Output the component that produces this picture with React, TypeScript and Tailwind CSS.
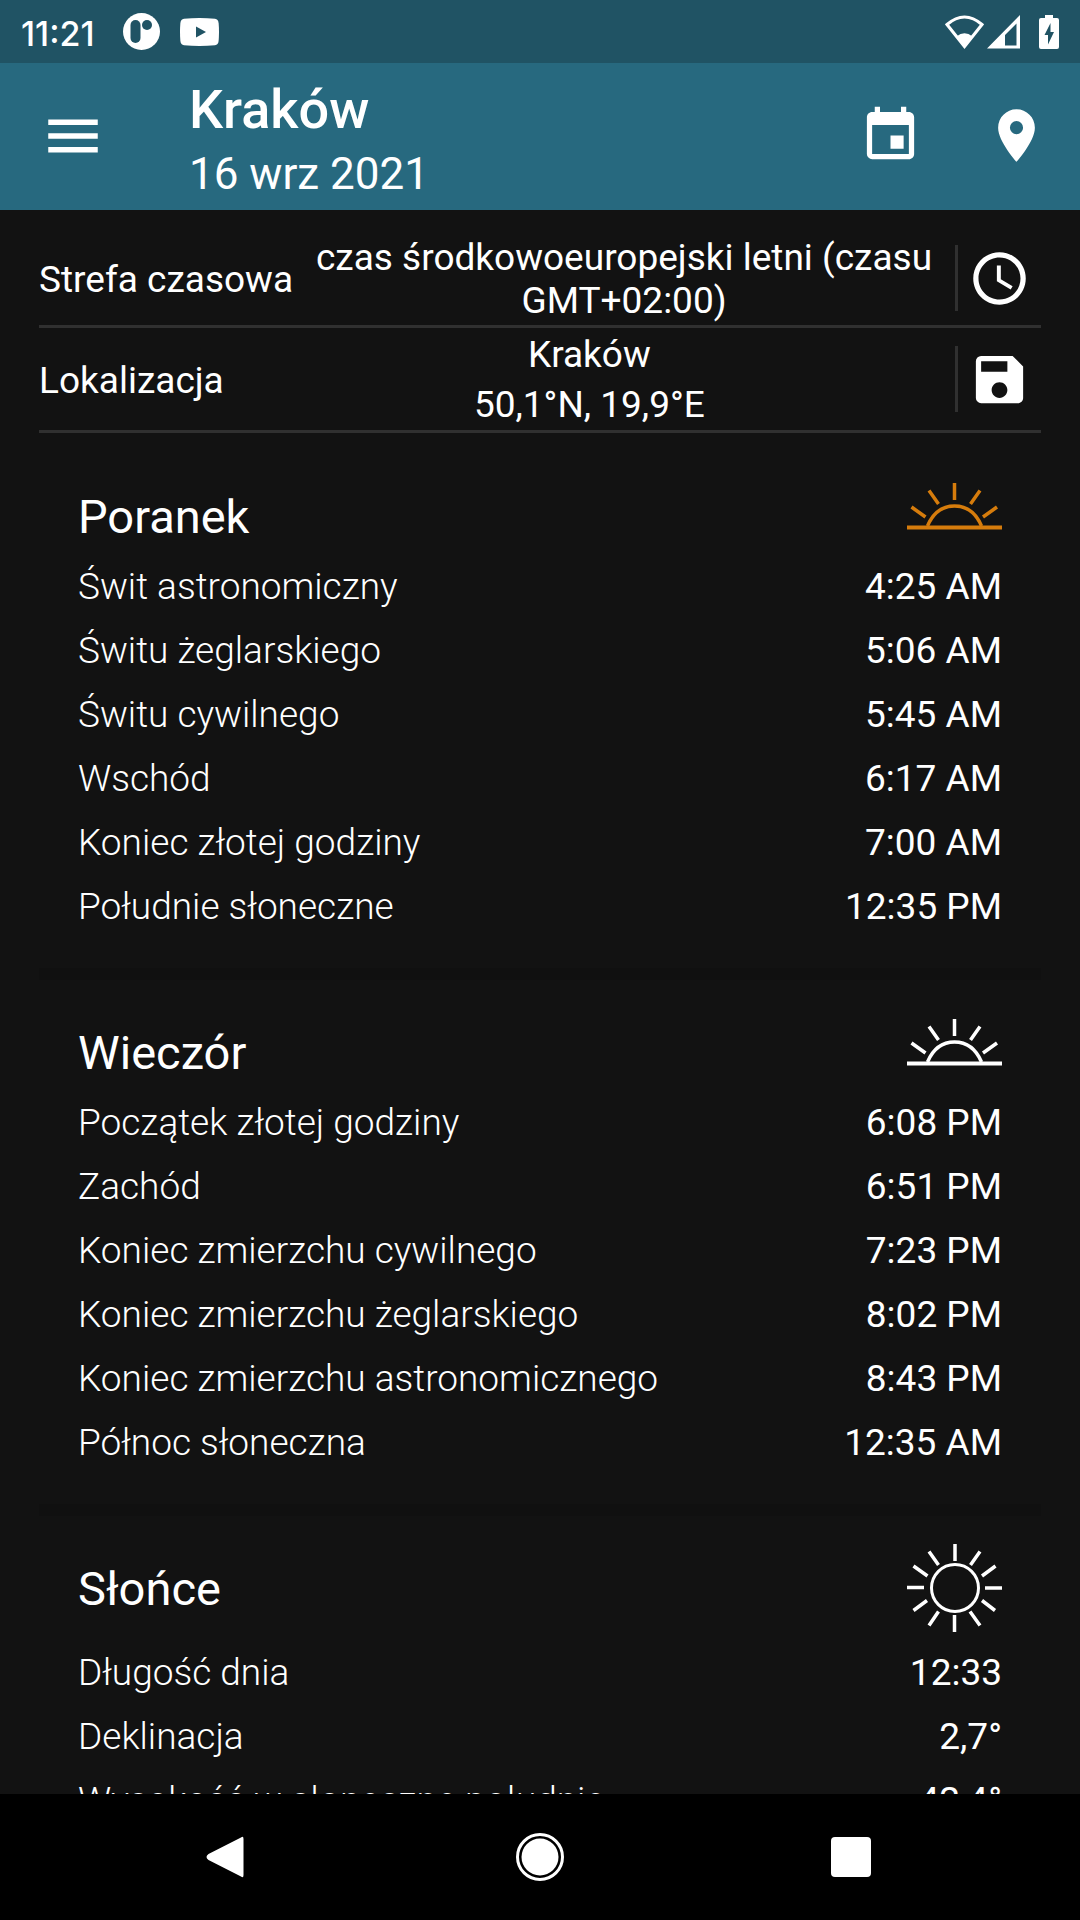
import type { ReactNode } from "react";
import {
  MdAccessTime,
  MdEvent,
  MdLocationOn,
  MdMenu,
  MdSave,
} from "react-icons/md";

type Row = [label: string, value: string];

const morning: Row[] = [
  ["Świt astronomiczny", "4:25 AM"],
  ["Świtu żeglarskiego", "5:06 AM"],
  ["Świtu cywilnego", "5:45 AM"],
  ["Wschód", "6:17 AM"],
  ["Koniec złotej godziny", "7:00 AM"],
  ["Południe słoneczne", "12:35 PM"],
];

const evening: Row[] = [
  ["Początek złotej godziny", "6:08 PM"],
  ["Zachód", "6:51 PM"],
  ["Koniec zmierzchu cywilnego", "7:23 PM"],
  ["Koniec zmierzchu żeglarskiego", "8:02 PM"],
  ["Koniec zmierzchu astronomicznego", "8:43 PM"],
  ["Północ słoneczna", "12:35 AM"],
];

const sun: Row[] = [
  ["Długość dnia", "12:33"],
  ["Deklinacja", "2,7°"],
  ["Wysokość w słoneczne południe", "42,4°"],
];

const HorizonIcon = ({ className }: { className: string }) => (
  <svg
    className={className}
    width={95}
    height={60}
    viewBox="0 0 95 60"
    fill="none"
    stroke="currentColor"
    strokeWidth={3.5}
    aria-hidden="true"
  >
    <path d="M0 44.5H95" strokeWidth={4} />
    <path d="M20.5 43C26 30 35 23 47.5 23S69 30 74.5 43" />
    <path d="M47.5 0V17M22 7.5L31.5 21M73 7.5L63.5 21M4.5 24L18.5 34M90 24L76 34" />
  </svg>
);

const SunIcon = () => (
  <svg
    width={95}
    height={96}
    viewBox="0 0 95 96"
    fill="none"
    stroke="currentColor"
    strokeWidth={3.5}
    aria-hidden="true"
  >
    <circle cx="48" cy="44" r="23.5" strokeWidth={3} />
    <path d="M48 0V17M47.5 71V88M0 43.5H17M78 44H95" />
    <path d="M22 7.5L31.5 21M73 7.5L63.5 21M6.5 22L20.5 32M88.5 22L75 32" />
    <path d="M22 81.5L31.5 67.5M73 81.5L63 67.5M6.5 66.5L20 56.5M88 66.5L75 56.5" />
  </svg>
);

const StatusBar = () => (
  <div className="flex h-[63px] shrink-0 items-center justify-between bg-[#205364] px-[21px]">
    <div className="flex items-center">
      <span className="pt-1 font-[Inter,sans-serif] text-[34px] leading-10 font-medium">
        11:21
      </span>
      <svg className="ml-7" width={37} height={37} viewBox="0 0 37 37" aria-hidden="true">
        <circle cx="18.5" cy="18.5" r="18.5" fill="#fff" />
        <rect x="7.5" y="7" width="10" height="23" rx="5" fill="#205364" />
        <circle cx="24" cy="12" r="5" fill="#205364" />
      </svg>
      <svg className="ml-5" width={39} height={28} viewBox="0 0 39 28" aria-hidden="true">
        <path
          fill="#fff"
          d="M4 .8Q19.500-.8 35 .8 38.200 1.200 38.600 5 39.400 14 38.600 23 38.200 26.800 35 27.200 19.500 28.800 4 27.200.8 26.800.4 23-.4 14 .4 5 .8 1.200 4 .8z"
        />
        <path d="M16 8.500v11L26 14z" fill="#205364" />
      </svg>
    </div>
    <div className="flex items-center">
      <svg width={39} height={34} viewBox="0 0 39 34" aria-hidden="true">
        <path
          d="M2 9.500Q19.500-5.500 37 9.500L19.500 31.500z"
          fill="none"
          stroke="#fff"
          strokeWidth="3"
        />
        <path d="M11.500 21.500Q19.500 15 27.500 21.500L19.500 33z" fill="#fff" />
      </svg>
      <svg className="ml-[3px]" width={33} height={34} viewBox="0 0 33 34" aria-hidden="true">
        <path
          fill="#fff"
          fillRule="evenodd"
          d="M33 0V33.500H0zM29.500 8.500L18 20V30.500H29.500z"
        />
      </svg>
      <svg className="ml-[19px]" width={20} height={34} viewBox="0 0 20 34" aria-hidden="true">
        <path
          fill="#fff"
          d="M6 0h8v3h4q2 0 2 2v27q0 2-2 2H2q-2 0-2-2V5q0-2 2-2h4z"
        />
        <path d="M11.500 8L5.500 20H9v9.500L15 17h-3.500z" fill="#205364" />
      </svg>
    </div>
  </div>
);

const AppBar = () => (
  <header className="flex h-[147px] shrink-0 items-center bg-[#27697f] pr-8 pb-[2px] pl-10">
    <button type="button" aria-label="Menu">
      <MdMenu className="size-[66px]" />
    </button>
    <div className="ml-[83px] flex-1 pt-3">
      <h1 className="text-[54px] leading-[64px] font-medium">Kraków</h1>
      <p className="text-[44px] leading-[64px]">16 wrz 2021</p>
    </div>
    <button type="button" aria-label="Data">
      <MdEvent className="size-[63px]" />
    </button>
    <button type="button" aria-label="Miejsce" className="ml-[63px]">
      <MdLocationOn className="size-[63px]" />
    </button>
  </header>
);

type InfoRowProps = {
  label: string;
  action: string;
  icon: ReactNode;
  children: ReactNode;
};
const InfoRow = ({ label, action, icon, children }: InfoRowProps) => (
  <div className="flex items-center border-b-[3px] border-[#303030]">
    <span className="shrink-0 pt-[2px]">{label}</span>
    <div className="flex-1 pt-[2px] text-center">{children}</div>
    <div className="flex h-[66px] items-center border-l-[3px] border-[#303030] px-[10px]">
      <button type="button" aria-label={action}>
        {icon}
      </button>
    </div>
  </div>
);

type SectionProps = {
  title: string;
  icon: ReactNode;
  rows: Row[];
};
const Section = ({ title, icon, rows }: SectionProps) => (
  <section className="px-[39px] pt-[34px] pb-9">
    <div className="flex min-h-[82px] items-start justify-between">
      <h2 className="pt-[15px] text-[47px] leading-[60px]">{title}</h2>
      {icon}
    </div>
    <table className="w-full" aria-label={title}>
      <tbody>
        {rows.map(([label, value]) => (
          <tr key={label} className="h-16">
            <th scope="row" className="p-0 text-left font-light">
              {label}
            </th>
            <td className="p-0 text-right">{value}</td>
          </tr>
        ))}
      </tbody>
    </table>
  </section>
);

const NavBar = () => (
  <nav className="flex h-[126px] shrink-0 items-center justify-around bg-black px-[74px]">
    <button type="button" aria-label="Wstecz">
      <svg width={48} height={48} viewBox="0 0 48 48">
        <path
          fill="#fff"
          d="M36 4.500Q38.500 2.500 38.500 6V42Q38.500 45.500 36 43.500L3.500 27Q-.5 24 3.500 21z"
        />
      </svg>
    </button>
    <button type="button" aria-label="Ekran główny">
      <svg width={48} height={48} viewBox="0 0 48 48">
        <circle cx="24" cy="24" r="22.500" fill="none" stroke="#fff" strokeWidth="3" />
        <circle cx="24" cy="24" r="18.500" fill="#fff" />
      </svg>
    </button>
    <button type="button" aria-label="Ostatnie">
      <svg width={48} height={48} viewBox="0 0 48 48">
        <rect x="4" y="4" width="40" height="40" rx="4" fill="#fff" />
      </svg>
    </button>
  </nav>
);

const App = () => {
  return (
    <div className="flex h-screen flex-col bg-[#121212] font-[Roboto,sans-serif] text-white">
      <StatusBar />
      <AppBar />
      <main className="min-h-0 flex-1 overflow-hidden px-[39px] pt-[21px] text-[37px] leading-[43px]">
        <div className="mb-[5px]">
          <InfoRow
            label="Strefa czasowa"
            action="Zmień strefę czasową"
            icon={<MdAccessTime className="size-[63px]" />}
          >
            <p className="py-[3px]">
              czas środkowoeuropejski letni (czasu GMT+02:00)
            </p>
          </InfoRow>
          <InfoRow
            label="Lokalizacja"
            action="Zapisz lokalizację"
            icon={<MdSave className="size-[63px]" />}
          >
            <p className="leading-[50px]">Kraków</p>
            <p className="leading-[50px]">50,1°N, 19,9°E</p>
          </InfoRow>
        </div>
        <Section
          title="Poranek"
          icon={<HorizonIcon className="mt-[11px] text-[#d67c0c]" />}
          rows={morning}
        />
        <hr className="-my-[6px] h-3 border-0 bg-[#101010]" />
        <Section
          title="Wieczór"
          icon={<HorizonIcon className="mt-[11px] text-white" />}
          rows={evening}
        />
        <hr className="-my-[6px] h-3 border-0 bg-[#101010]" />
        <Section title="Słońce" icon={<SunIcon />} rows={sun} />
      </main>
      <NavBar />
    </div>
  );
};
export default App;
